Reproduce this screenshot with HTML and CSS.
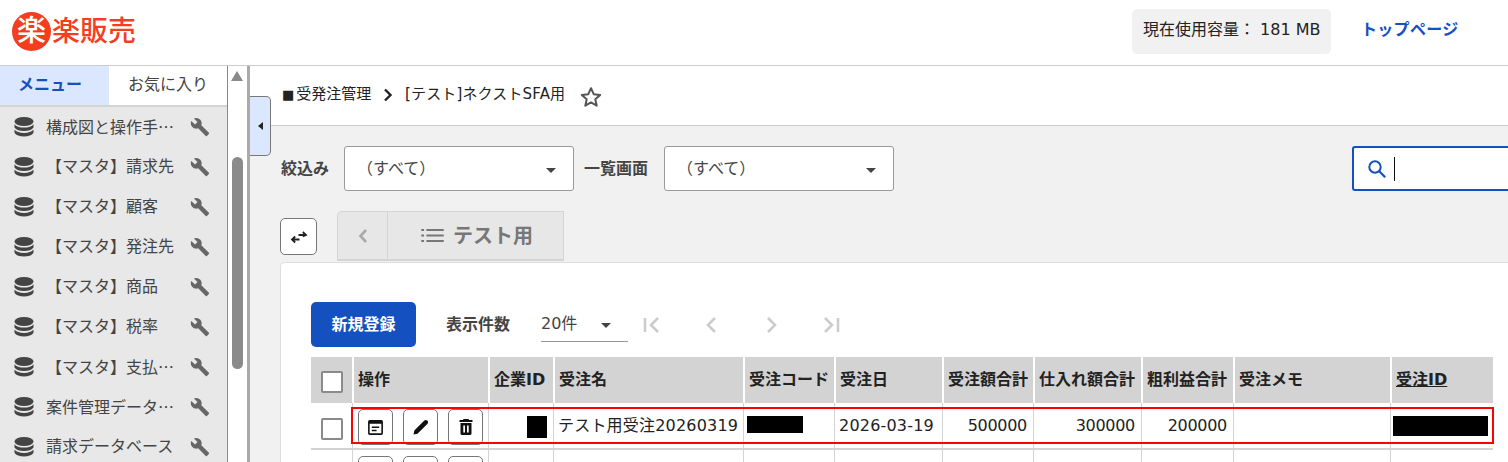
FILE: index.html
```html
<!DOCTYPE html>
<html lang="ja">
<head>
<meta charset="utf-8">
<title>楽販売</title>
<link rel="stylesheet" href="styles.css">
</head>
<body>
<svg class="defs" width="0" height="0">
  <symbol id="db" viewBox="0 0 20 20"><ellipse cx="10" cy="4.5" rx="9.5" ry="4.5"/><path d="M.5 7.2C2 9.6 5.6 10.6 10 10.6s8-1 9.500-3.400v3.200C18 12.900 14.400 13.900 10 13.900S2 12.900.5 10.400z"/><path d="M.5 12.600C2 15 5.600 16 10 16s8-1 9.500-3.400v3.200C18 18.400 14.400 19.500 10 19.500S2 18.400.5 15.800z"/></symbol>
  <symbol id="wrench" viewBox="0 0 24 24"><path d="M22.700 19l-9.100-9.100c.9-2.300.4-5-1.500-6.900-2-2-5-2.400-7.400-1.300L9 6 6 9 1.600 4.700C.4 7.100.9 10.100 2.900 12.100c1.900 1.900 4.600 2.400 6.900 1.500l9.100 9.100c.4.4 1 .4 1.400 0l2.300-2.300c.5-.4.500-1.100.1-1.400z"/></symbol>
  <symbol id="detail" viewBox="0 0 16 16"><path d="M2.500 1h11A1.500 1.500 0 0 1 15 2.500v11a1.500 1.500 0 0 1-1.500 1.500h-11A1.500 1.500 0 0 1 1 13.500v-11A1.500 1.500 0 0 1 2.500 1zm0 3.500v9h11v-9zM4.500 7h7v1.500h-7zm0 3h4.500v1.500H4.500z" fill-rule="evenodd"/></symbol>
  <symbol id="pen" viewBox="0 0 24 24"><path d="M3 21l1-4.800L16 4.200c1-1 2.400-1 3.400 0l.4.4c1 1 1 2.400 0 3.400L7.800 20z"/></symbol>
  <symbol id="trash" viewBox="0 0 16 16"><path d="M5.500 0h5l.7 1h3.300v2h-13V1h3.300zM2.500 4h11v10.500a1.500 1.500 0 0 1-1.500 1.500H4a1.500 1.500 0 0 1-1.500-1.500zM5.300 6.500v7h1.700v-7zm3.700 0v7h1.700v-7z" fill-rule="evenodd"/></symbol>
</svg>

<header class="topbar">
  <div class="logo"><span class="logo-mark">楽</span><span class="logo-name">楽販売</span></div>
  <div class="storage">現在使用容量： 181 MB</div>
  <a class="toplink">トップページ</a>
</header>

<div class="app">
  <aside class="sidebar">
    <div class="side-tabs">
      <div class="side-tab active">メニュー</div>
      <div class="side-tab">お気に入り</div>
    </div>
    <ul class="menu">
      <li class="menu-item"><svg class="db"><use href="#db"/></svg><span class="menu-text">構成図と操作手<span class="cjk">…</span></span><svg class="wr"><use href="#wrench"/></svg></li>
      <li class="menu-item"><svg class="db"><use href="#db"/></svg><span class="menu-text">【マスタ】請求先</span><svg class="wr"><use href="#wrench"/></svg></li>
      <li class="menu-item"><svg class="db"><use href="#db"/></svg><span class="menu-text">【マスタ】顧客</span><svg class="wr"><use href="#wrench"/></svg></li>
      <li class="menu-item"><svg class="db"><use href="#db"/></svg><span class="menu-text">【マスタ】発注先</span><svg class="wr"><use href="#wrench"/></svg></li>
      <li class="menu-item"><svg class="db"><use href="#db"/></svg><span class="menu-text">【マスタ】商品</span><svg class="wr"><use href="#wrench"/></svg></li>
      <li class="menu-item"><svg class="db"><use href="#db"/></svg><span class="menu-text">【マスタ】税率</span><svg class="wr"><use href="#wrench"/></svg></li>
      <li class="menu-item"><svg class="db"><use href="#db"/></svg><span class="menu-text">【マスタ】支払<span class="cjk">…</span></span><svg class="wr"><use href="#wrench"/></svg></li>
      <li class="menu-item"><svg class="db"><use href="#db"/></svg><span class="menu-text">案件管理データ<span class="cjk">…</span></span><svg class="wr"><use href="#wrench"/></svg></li>
      <li class="menu-item"><svg class="db"><use href="#db"/></svg><span class="menu-text">請求データベース</span><svg class="wr"><use href="#wrench"/></svg></li>
    </ul>
  </aside>
  <div class="side-scroll"><span class="scroll-up"></span><span class="scroll-thumb"></span></div>

  <main class="main">
    <button class="collapse" aria-label="閉じる"><span class="collapse-arrow"></span></button>
    <div class="crumbs">
      <span class="crumb-root"><span class="crumb-mark">■</span>受発注管理</span>
      <svg class="crumb-sep" viewBox="0 0 10 14"><path d="M2 1.500L7.500 7 2 12.500" fill="none" stroke="#222" stroke-width="2.400"/></svg>
      <span class="crumb-cur">[テスト]ネクストSFA用</span>
      <svg class="star" viewBox="0 0 24 24"><path d="M12 3.200l2.700 6 6.500.7-4.900 4.400 1.400 6.400L12 17.400l-5.700 3.300 1.400-6.400-4.900-4.400 6.500-.7z" fill="none" stroke="#555" stroke-width="2" stroke-linejoin="round"/></svg>
    </div>

    <div class="content">
      <div class="filters">
        <label class="f-label">絞込み</label>
        <div class="select"><span>（すべて）</span><i class="caret"></i></div>
        <label class="f-label">一覧画面</label>
        <div class="select"><span>（すべて）</span><i class="caret"></i></div>
        <div class="search">
          <svg class="search-ico" viewBox="0 0 20 20"><circle cx="8" cy="8" r="5.700" fill="none" stroke="#1450bf" stroke-width="2"/><path d="M12.200 12.200l6 6" stroke="#1450bf" stroke-width="2.200"/></svg>
          <span class="cursor"></span>
        </div>
      </div>

      <div class="tabs-row">
        <button class="swap" aria-label="切替">
          <svg viewBox="0 0 20 20"><path d="M9.500 8h7.500M13.800 5l3.200 3-3.200 1.500M3 12.500h7.500M6.200 9.500L3 12.500l3.200 3" fill="none" stroke="#222" stroke-width="1.800"/></svg>
        </button>
        <div class="view-tabs">
          <div class="vt-prev"><svg viewBox="0 0 10 16"><path d="M8 2L2.500 8 8 14" fill="none" stroke="#aaa" stroke-width="2.600"/></svg></div>
          <div class="vt-cur">
            <svg class="list-ico" viewBox="0 0 24 16"><path d="M0 1h3v2.200H0zm5.500 0H24v2.200H5.500zM0 6.900h3v2.200H0zm5.500 0H24v2.200H5.500zM0 12.800h3V15H0zm5.500 0H24V15H5.500z" fill="#777"/></svg>
            <span>テスト用</span>
          </div>
        </div>
      </div>

      <section class="card">
        <div class="toolbar">
          <button class="primary">新規登録</button>
          <span class="count-label">表示件数</span>
          <div class="count-select"><span>20件</span><i class="caret"></i></div>
          <div class="pager">
            <svg viewBox="0 0 20 18"><path d="M2 2v14" stroke="#ccc" stroke-width="2.600"/><path d="M15 2L8 9l7 7" fill="none" stroke="#ccc" stroke-width="2.600"/></svg>
            <svg viewBox="0 0 20 18"><path d="M13 2L6 9l7 7" fill="none" stroke="#ccc" stroke-width="2.600"/></svg>
            <svg viewBox="0 0 20 18"><path d="M7 2l7 7-7 7" fill="none" stroke="#ccc" stroke-width="2.600"/></svg>
            <svg viewBox="0 0 20 18"><path d="M18 2v14" stroke="#ccc" stroke-width="2.600"/><path d="M5 2l7 7-7 7" fill="none" stroke="#ccc" stroke-width="2.600"/></svg>
          </div>
        </div>

        <div class="table-wrap">
          <table class="grid">
            <colgroup>
              <col class="c1"><col class="c2"><col class="c3"><col class="c4"><col class="c5"><col class="c6"><col class="c7"><col class="c8"><col class="c9"><col class="c10"><col class="c11">
            </colgroup>
            <thead>
              <tr>
                <th class="chk"><span class="checkbox"></span></th>
                <th>操作</th><th>企業ID</th><th>受注名</th><th>受注コード</th><th>受注日</th><th>受注額合計</th><th>仕入れ額合計</th><th>粗利益合計</th><th>受注メモ</th><th><u>受注ID</u></th>
              </tr>
            </thead>
            <tbody>
              <tr>
                <td class="chk"><span class="checkbox"></span></td>
                <td class="ops">
                  <button class="op"><svg class="ico-detail"><use href="#detail"/></svg></button>
                  <button class="op"><svg class="ico-pen"><use href="#pen"/></svg></button>
                  <button class="op"><svg class="ico-trash"><use href="#trash"/></svg></button>
                </td>
                <td class="mask-cell"><span class="mask m-id"></span></td>
                <td>テスト用受注20260319</td>
                <td class="mask-cell"><span class="mask m-code"></span></td>
                <td>2026-03-19</td>
                <td class="num">500000</td>
                <td class="num">300000</td>
                <td class="num">200000</td>
                <td></td>
                <td class="mask-cell"><span class="mask m-oid"></span></td>
              </tr>
              <tr>
                <td class="chk"><span class="checkbox"></span></td>
                <td class="ops">
                  <button class="op"></button>
                  <button class="op"></button>
                  <button class="op"></button>
                </td>
                <td></td><td></td><td></td><td></td><td></td><td></td><td></td><td></td><td></td>
              </tr>
            </tbody>
          </table>
          <div class="highlight"></div>
        </div>
      </section>
    </div>
  </main>
</div>
</body>
</html>
```
FILE: styles.css
```css
* { box-sizing: border-box; }
html, body { margin: 0; height: 100%; }
body {
  width: 1508px;
  height: 462px;
  overflow: hidden;
  background: #fff;
  color: #222;
  font: 16px/1.5 "DejaVu Sans", "Noto Sans CJK JP", sans-serif;
}
.defs { position: absolute; }
ul { margin: 0; padding: 0; list-style: none; }
button { font: inherit; cursor: pointer; padding: 0; }
.cjk { font-family: "Noto Sans CJK JP", sans-serif; }

/* header */
.topbar {
  height: 66px;
  display: flex;
  align-items: center;
  padding: 0 50px 3px 12px;
  border-bottom: 1px solid #ccc;
}
.logo { display: flex; align-items: center; margin-right: auto; }
.logo-mark {
  width: 39px;
  height: 39px;
  border-radius: 50%;
  background: #f53e1f;
  color: #fff;
  font-size: 29px;
  font-weight: 500;
  line-height: 38px;
  text-align: center;
}
.logo-name { color: #f53e1f; font-size: 28px; font-weight: 500; line-height: 39px; margin-left: 1px; }
.storage {
  width: 199px;
  height: 45px;
  line-height: 42px;
  padding-left: 11px;
  background: #f1f1f1;
  border-radius: 5px;
  white-space: nowrap;
}
.toplink {
  margin: 0 0 3px 30px;
  width: 97px;
  color: #1450bf;
  font-weight: 700;
  letter-spacing: .3px;
  white-space: nowrap;
}

/* sidebar */
.app { display: flex; height: 396px; }
.sidebar {
  width: 228px;
  flex: none;
  border-right: 1px solid #888;
  background: #e8e8e8;
}
.side-tabs {
  display: flex;
  height: 41px;
  background: #fff;
  border-bottom: 2px solid #d4d4d4;
}
.side-tab { flex: 1; text-align: center; line-height: 38px; color: #444; }
.side-tab.active {
  flex: none;
  width: 109px;
  padding-right: 9px;
  background: #dbe7ff;
  color: #1450bf;
  font-weight: 700;
}
.menu-item {
  height: 40px;
  display: flex;
  align-items: center;
  padding-left: 14px;
  color: #444;
  white-space: nowrap;
}
.db { width: 20px; height: 20px; fill: #444; flex: none; }
.menu-text { width: 144px; margin-left: 12px; }
.wr { width: 20px; height: 20px; fill: #666; flex: none; }

.side-scroll {
  position: relative;
  width: 22px;
  flex: none;
  background: #fff;
  border-right: 3px solid #aaa;
}
.scroll-up {
  position: absolute;
  left: 3px;
  top: 5px;
  border: 6.500px solid transparent;
  border-top: 0;
  border-bottom: 10px solid #8a8a8a;
}
.scroll-thumb {
  position: absolute;
  left: 4px;
  top: 91px;
  width: 11px;
  height: 212px;
  border-radius: 6px;
  background: #8a8a8a;
}

/* main */
.main { position: relative; flex: 1; min-width: 0; }
.collapse {
  position: absolute;
  left: 0;
  top: 30px;
  width: 21px;
  height: 60px;
  background: #dbe7ff;
  border: 1px solid #777;
  border-left: 0;
  border-radius: 0 5px 5px 0;
  z-index: 2;
}
.collapse-arrow {
  display: block;
  margin-left: 8px;
  border: 4px solid transparent;
  border-left: 0;
  border-right: 5px solid #222;
  width: 0;
}
.crumbs {
  height: 60px;
  display: flex;
  align-items: center;
  padding: 0 0 2px 32px;
  border-bottom: 1px solid #ccc;
  font-size: 15px;
  white-space: nowrap;
}
.crumb-root { width: 88px; }
.crumb-mark { font-size: 13px; margin-right: 2px; }
.crumb-sep { width: 10px; height: 14px; margin: 0 0 0 13px; flex: none; }
.crumb-cur { margin-left: 12px; width: 161px; letter-spacing: .15px; }
.star { width: 24px; height: 24px; margin: 4px 0 0 13px; flex: none; }

.content { height: 336px; background: #f1f1f1; overflow: hidden; padding-left: 30px; }
.filters { display: flex; align-items: center; height: 45px; margin-top: 20px; }
.f-label { width: 64px; font-weight: 700; color: #444; white-space: nowrap; }
.f-label:first-child { margin-left: 1px; width: 63px; }
.select + .f-label { width: 90px; padding-left: 10px; }
.select {
  position: relative;
  width: 230px;
  height: 45px;
  line-height: 44px;
  padding-left: 12px;
  background: #fff;
  border: 1px solid #999;
  border-radius: 3px;
  color: #444;
}
.caret {
  position: absolute;
  right: 17px;
  top: 21px;
  border: 5px solid transparent;
  border-bottom: 0;
  border-top: 5px solid #444;
}
.search {
  display: flex;
  align-items: center;
  width: 156px;
  height: 45px;
  margin-left: auto;
  padding-left: 13px;
  background: #fff;
  border: 2px solid #1450bf;
  border-right: 0;
  border-radius: 3px 0 0 3px;
}
.search-ico { width: 20px; height: 20px; flex: none; }
.cursor { width: 1px; height: 24px; background: #111; margin-left: 7px; }

.tabs-row { display: flex; height: 50px; margin-top: 20px; }
.swap {
  width: 37px;
  height: 37px;
  margin-top: 7px;
  background: #fff;
  border: 1px solid #777;
  border-radius: 5px;
  display: flex;
  align-items: center;
  justify-content: center;
}
.swap svg { width: 20px; height: 20px; }
.view-tabs {
  display: flex;
  margin-left: 20px;
  height: 50px;
  width: 227px;
  background: #e7e7e7;
  border: 1px solid #d4d4d4;
  border-bottom: 2px solid #d4d4d4;
  border-radius: 5px 0 0 0;
}
.vt-prev {
  width: 50px;
  display: flex;
  align-items: center;
  justify-content: center;
  border-right: 1px solid #d4d4d4;
}
.vt-prev svg { width: 10px; height: 16px; }
.vt-cur {
  flex: 1;
  display: flex;
  align-items: center;
  padding-left: 33px;
  color: #777;
  font-size: 20px;
  font-weight: 700;
}
.list-ico { width: 23px; height: 15px; margin-right: 9px; }

.card {
  height: 220px;
  margin-top: 1px;
  padding: 39px 0 0 30px;
  background: #fff;
  border: 1px solid #ddd;
  border-right: 0;
  border-radius: 5px 0 0 0;
}
.toolbar { display: flex; align-items: center; height: 45px; }
.primary {
  width: 105px;
  height: 45px;
  background: #1450bf;
  color: #fff;
  border: 0;
  border-radius: 5px;
  font-weight: 700;
}
.count-label { margin-left: 30px; width: 95px; font-weight: 700; color: #444; }
.count-select {
  position: relative;
  width: 87px;
  height: 40px;
  line-height: 44px;
  border-bottom: 1px solid #999;
  color: #444;
  align-self: flex-start;
}
.count-select .caret { right: 17px; top: 21px; }
.pager { display: flex; margin-left: 15px; gap: 39px; align-items: center; }
.pager svg { width: 20px; height: 18px; display: block; }

.table-wrap { position: relative; margin-top: 10px; width: 1183px; }
.grid { border-collapse: separate; border-spacing: 0; table-layout: fixed; width: 1182px; }
.c1 { width: 41px; } .c2 { width: 136px; } .c3 { width: 65px; } .c4 { width: 190px; }
.c5 { width: 91px; } .c6 { width: 108px; } .c7 { width: 91px; } .c8 { width: 108px; }
.c9 { width: 92px; } .c10 { width: 157px; } .c11 { width: 103px; }
.grid th {
  height: 46px;
  padding: 0 0 0 4px;
  background: #d3d3d3;
  border-left: 2px solid #fff;
  text-align: left;
  font-weight: 700;
  white-space: nowrap;
  overflow: hidden;
}
.grid th:first-child, .grid td:first-child { border-left: 0; }
.grid td {
  height: 47px;
  padding: 0 0 0 4px;
  border-left: 1px solid #d3d3d3;
  border-bottom: 2px solid #d3d3d3;
  white-space: nowrap;
  vertical-align: middle;
  overflow: hidden;
  letter-spacing: .2px;
}
.grid td.num { text-align: right; padding: 0 6px 0 0; letter-spacing: -.3px; }
.grid td.mask-cell { padding: 0; vertical-align: top; }
.grid .chk { padding: 0 0 0 10px; }
.grid th.chk { padding-top: 4px; }
.grid td.chk { padding-top: 6px; }
.checkbox {
  display: block;
  width: 22px;
  height: 22px;
  background: #fff;
  border: 2px solid #8a8a8a;
  border-radius: 2px;
}
.grid td.ops { padding: 6px 0 0 5px; vertical-align: top; font-size: 0; }
.op {
  width: 35px;
  height: 36px;
  margin-right: 10px;
  background: #fff;
  border: 1px solid #777;
  border-radius: 5px;
  vertical-align: top;
}
.op svg { display: block; margin: auto; fill: #111; }
.ico-detail { width: 17px; height: 17px; }
.ico-pen { width: 20px; height: 20px; }
.ico-trash { width: 16px; height: 16px; }
.mask { display: block; background: #000; margin-top: 13px; }
.m-id { width: 20px; height: 22px; margin-left: 38px; }
.m-code { width: 56px; height: 17px; margin-left: 3px; }
.m-oid { width: 95px; height: 20px; margin-left: 2px; }
.highlight {
  position: absolute;
  left: 40px;
  top: 50px;
  width: 1143px;
  height: 37px;
  border: 2px solid #f00;
  pointer-events: none;
}
```
